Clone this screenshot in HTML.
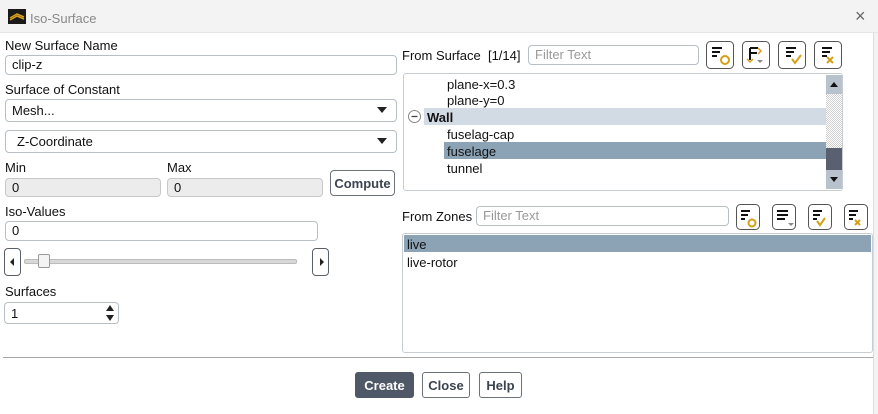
<!DOCTYPE html>
<html><head><style>
*{box-sizing:border-box;margin:0;padding:0}
body{width:878px;height:414px;background:#fff;font-family:"Liberation Sans",sans-serif;font-size:13px;color:#111;position:relative;overflow:hidden}
.a{position:absolute}
.lbl{position:absolute;line-height:16px;white-space:nowrap;padding-top:1px}
.in{position:absolute;border:1px solid #b8bec6;border-radius:4px;background:#fff;padding-left:6px;line-height:18px}
.dis{background:#ececec;border-color:#c8c8c8}
.btn{position:absolute;border:1px solid #6c727a;border-radius:3px;background:#fff;text-align:center;font-weight:bold;color:#3c4450}
.ib{position:absolute;border:1px solid #5a6068;border-radius:4px;background:#fff}
.tri{position:absolute;width:0;height:0;border-left:5px solid transparent;border-right:5px solid transparent;border-top:6px solid #222}
</style></head><body>
<div class="a" style="left:0;top:0;width:878px;height:33px;background:#f3f3f3;border-bottom:1px solid #e6e6e6"></div>
<svg class="a" style="left:8px;top:9px" width="18" height="15"><rect width="18" height="15" fill="#1a1a1a"/><path d="M2 9 L9 5 L16 8 M2 11 L9 7 L16 10" stroke="#d8a020" stroke-width="1.5" fill="none"/></svg>
<div class="lbl" style="left:30px;top:10px;color:#888">Iso-Surface</div>
<div class="lbl" style="left:855px;top:7px;font-size:18px;color:#666">×</div>
<div class="a" style="left:873px;top:33px;width:5px;height:381px;background:#f3f3f3;border-left:1px solid #ddd"></div>

<div class="lbl" style="left:5px;top:37px">New Surface Name</div>
<div class="in" style="left:5px;top:55px;width:392px;height:20px">clip-z</div>
<div class="lbl" style="left:5px;top:81px">Surface of Constant</div>
<div class="in" style="left:5px;top:99px;width:392px;height:23px;line-height:22px">Mesh...</div>
<div class="tri" style="left:377px;top:107px"></div>
<div class="in" style="left:5px;top:130px;width:392px;height:23px;line-height:22px;padding-left:11px">Z-Coordinate</div>
<div class="tri" style="left:377px;top:138px"></div>
<div class="lbl" style="left:5px;top:159px">Min</div>
<div class="lbl" style="left:167px;top:159px">Max</div>
<div class="in dis" style="left:5px;top:178px;width:156px;height:19px;line-height:18px">0</div>
<div class="in dis" style="left:167px;top:178px;width:156px;height:19px;line-height:18px">0</div>
<div class="btn" style="left:330px;top:170px;width:65px;height:26px;line-height:25px;border-radius:4px">Compute</div>
<div class="lbl" style="left:5px;top:203px">Iso-Values</div>
<div class="in" style="left:5px;top:221px;width:313px;height:20px">0</div>
<div class="ib" style="left:4px;top:248px;width:17px;height:28px"><div class="a" style="left:5px;top:9px;border-top:4px solid transparent;border-bottom:4px solid transparent;border-right:4px solid #222"></div></div>
<div class="a" style="left:24px;top:259px;width:273px;height:5px;background:#d8d8d8;border:1px solid #bbb;border-radius:2px"></div>
<div class="a" style="left:38px;top:254px;width:12px;height:14px;background:#f4f4f4;border:1px solid #999;border-radius:2px"></div>
<div class="ib" style="left:312px;top:248px;width:17px;height:28px"><div class="a" style="left:7px;top:9px;border-top:4px solid transparent;border-bottom:4px solid transparent;border-left:4px solid #222"></div></div>
<div class="lbl" style="left:5px;top:283px">Surfaces</div>
<div class="in" style="left:4px;top:302px;width:115px;height:22px;line-height:21px">1</div>
<div class="a" style="left:106px;top:305px;border-left:4px solid transparent;border-right:4px solid transparent;border-bottom:6px solid #222"></div>
<div class="a" style="left:106px;top:315px;border-left:4px solid transparent;border-right:4px solid transparent;border-top:6px solid #222"></div>

<div class="lbl" style="left:402px;top:47px">From Surface&nbsp; [1/14]</div>
<div class="in" style="left:528px;top:45px;width:171px;height:20px;color:#999">Filter Text</div>
<svg class="a" style="left:706px;top:41px" width="140" height="29">
<g fill="none" stroke="#555" stroke-width="1"><rect x="0.5" y="0.5" width="27" height="27" rx="4"/><rect x="36.5" y="0.5" width="27" height="27" rx="4"/><rect x="72.5" y="0.5" width="27" height="27" rx="4"/><rect x="108.5" y="0.5" width="27" height="27" rx="4"/></g>
<g stroke="#111" stroke-width="2"><path d="M6 7h10M6 11h8M6 15h5"/><path d="M80 7h10M80 11h8M80 15h5"/><path d="M116 7h10M116 11h8M116 15h5"/><path d="M44 7v12M44 7h8M44 12h7"/></g>
<circle cx="19" cy="19" r="4" fill="none" stroke="#d4a017" stroke-width="2"/>
<path d="M86 18l3 4 6-8" fill="none" stroke="#d4a017" stroke-width="2"/>
<path d="M121 16l6 6M127 16l-6 6" stroke="#d4a017" stroke-width="2"/>
<path d="M52 7l3 3-3 3M41 18l3 3 3-3" fill="none" stroke="#d4a017" stroke-width="1.5"/>
<path d="M51 19h6l-3 3z" fill="#888"/>
</svg>
<div class="a" style="left:403px;top:73px;width:440px;height:118px;border:1px solid #c8cdd2;border-radius:3px"></div>
<div class="lbl" style="left:447px;top:76px">plane-x=0.3</div>
<div class="lbl" style="left:447px;top:92px">plane-y=0</div>
<div class="a" style="left:424px;top:108px;width:402px;height:17px;background:#d2dae3"></div>
<svg class="a" style="left:407px;top:109px" width="15" height="15"><circle cx="7.5" cy="7.5" r="6" fill="#fff" stroke="#888"/><path d="M4.5 7.5h6" stroke="#444" stroke-width="1.3"/></svg>
<div class="lbl" style="left:427px;top:109px;font-weight:bold">Wall</div>
<div class="lbl" style="left:447px;top:126px">fuselag-cap</div>
<div class="a" style="left:444px;top:142px;width:382px;height:17px;background:#8ca3b6"></div>
<div class="lbl" style="left:447px;top:143px">fuselage</div>
<div class="lbl" style="left:447px;top:160px">tunnel</div>
<div class="a" style="left:826px;top:75px;width:16px;height:114px;background:repeating-conic-gradient(#d0d0d0 0 25%,#fff 0 50%) 0 0/2px 2px"></div>
<div class="a" style="left:826px;top:75px;width:16px;height:19px;background:#b8c2cc"></div>
<div class="a" style="left:830px;top:82px;border-left:4px solid transparent;border-right:4px solid transparent;border-bottom:5px solid #111"></div>
<div class="a" style="left:826px;top:148px;width:16px;height:22px;background:#5a6070"></div>
<div class="a" style="left:826px;top:170px;width:16px;height:19px;background:#b8c2cc"></div>
<div class="a" style="left:830px;top:177px;border-left:4px solid transparent;border-right:4px solid transparent;border-top:5px solid #111"></div>

<div class="lbl" style="left:402px;top:208px">From Zones</div>
<div class="in" style="left:476px;top:206px;width:253px;height:20px;color:#999">Filter Text</div>
<svg class="a" style="left:736px;top:204px" width="135" height="27">
<g fill="none" stroke="#555"><rect x="0.5" y="0.5" width="23" height="25" rx="4"/><rect x="36.5" y="0.5" width="23" height="25" rx="4"/><rect x="72.5" y="0.5" width="23" height="25" rx="4"/><rect x="108.5" y="0.5" width="23" height="25" rx="4"/></g>
<g stroke="#111" stroke-width="2"><path d="M5 7h9M5 11h7M5 15h4"/><path d="M41 7h11M41 11h11M41 15h8"/><path d="M77 7h9M77 11h7M77 15h4"/><path d="M113 7h9M113 11h7M113 15h4"/></g>
<circle cx="16" cy="19" r="3.5" fill="none" stroke="#d4a017" stroke-width="2"/>
<path d="M81 17l3 4 5-7" fill="none" stroke="#d4a017" stroke-width="2"/>
<path d="M119 16l5 5M124 16l-5 5" stroke="#d4a017" stroke-width="2"/>
<path d="M52 19h6l-3 3z" fill="#888"/>
</svg>
<div class="a" style="left:402px;top:233px;width:471px;height:120px;border:1px solid #c8cdd2;border-radius:3px"></div>
<div class="a" style="left:404px;top:235px;width:467px;height:17px;background:#8ca3b6"></div>
<div class="lbl" style="left:407px;top:236px">live</div>
<div class="lbl" style="left:407px;top:254px">live-rotor</div>

<div class="a" style="left:3px;top:357px;width:870px;height:1px;background:#a8a8a8"></div>
<div class="btn" style="left:355px;top:372px;width:59px;height:26px;line-height:25px;background:#4e5866;border-color:#4e5866;color:#fff">Create</div>
<div class="btn" style="left:422px;top:372px;width:48px;height:26px;line-height:25px">Close</div>
<div class="btn" style="left:479px;top:372px;width:43px;height:26px;line-height:25px">Help</div>
</body></html>
